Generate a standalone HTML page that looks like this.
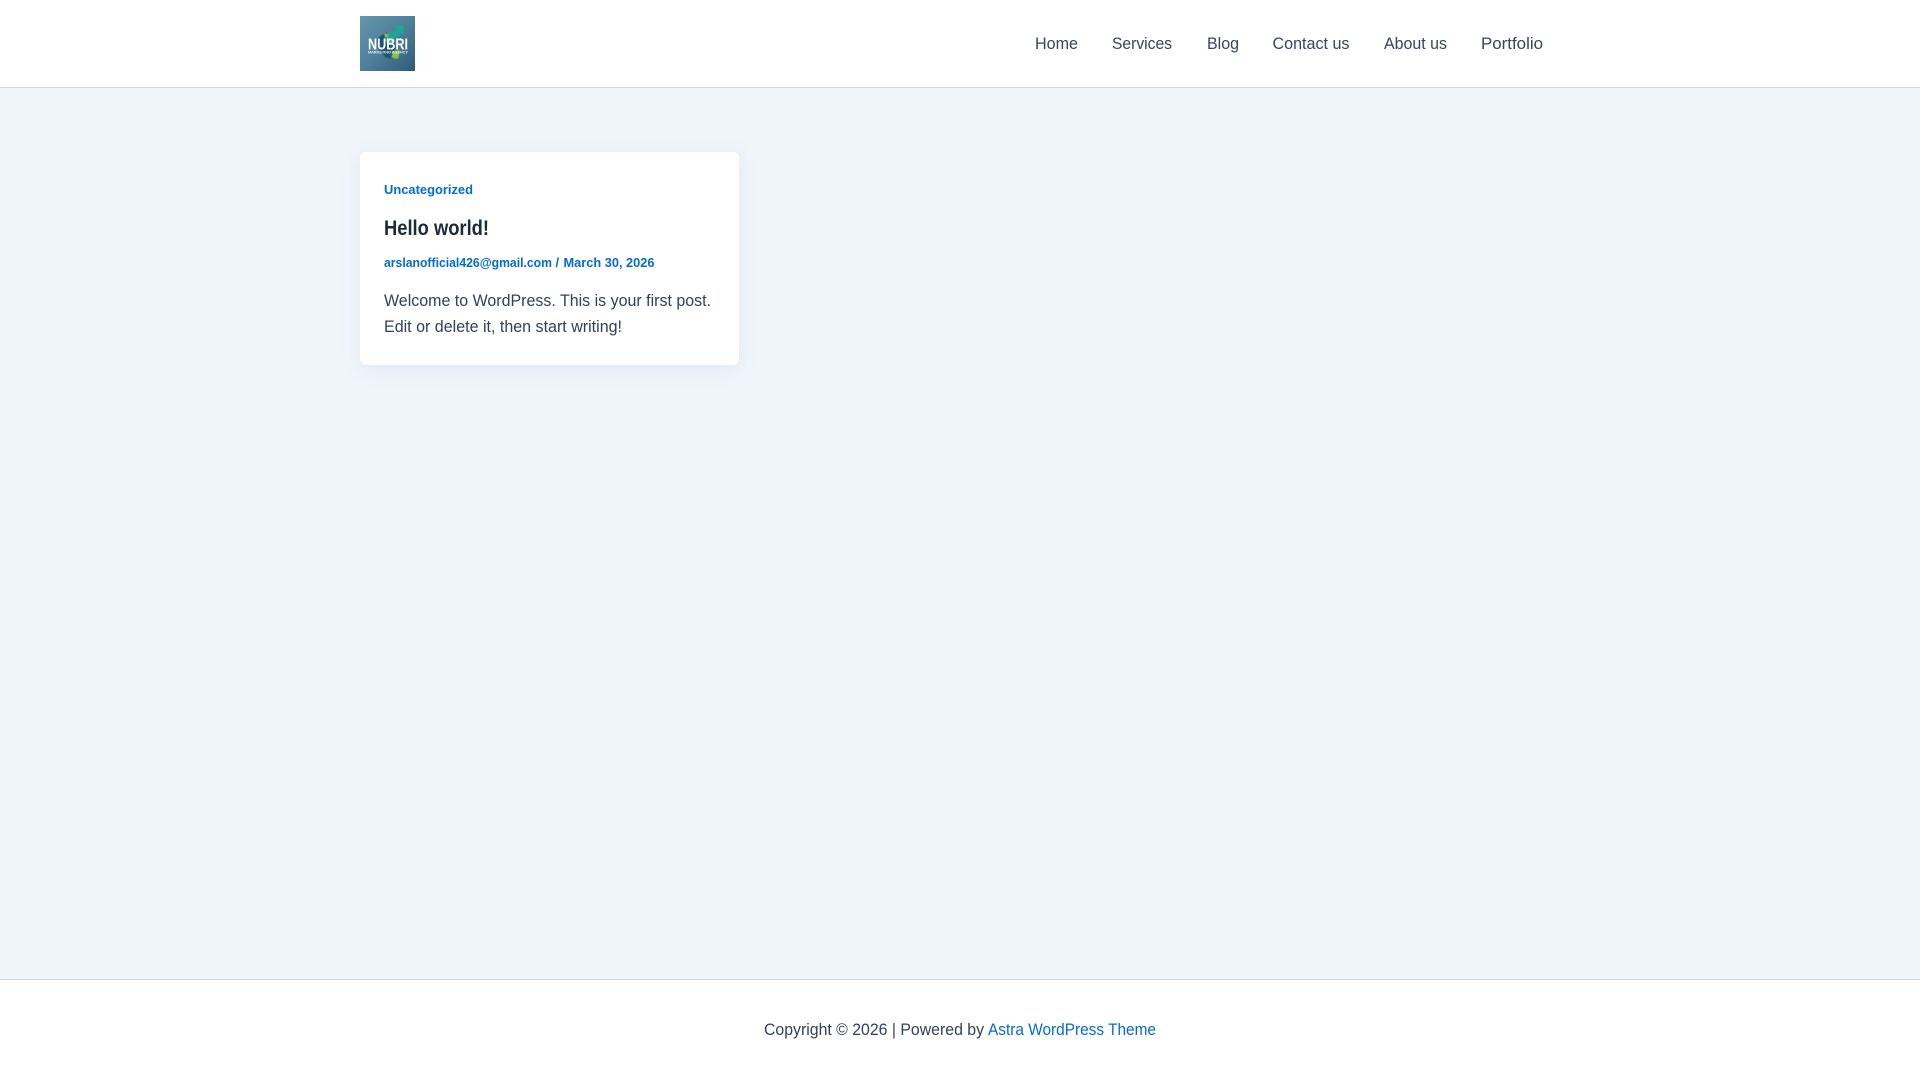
<!DOCTYPE html>
<html lang="en"><head><meta charset="utf-8"><title>Hello world</title>
<style>
html,body{margin:0;padding:0;width:1920px;height:1080px;overflow:hidden;background:#fff}
body{position:relative;font-family:"Liberation Sans",sans-serif}
.hdr{position:absolute;left:0;top:0;width:1920px;height:87px;background:#fff;border-bottom:1px solid #d1d5db}
.main{position:absolute;left:0;top:88px;width:1920px;height:891px;background:#f0f5fa}
.ftr{position:absolute;left:0;top:979px;width:1920px;height:101px;background:#fff;border-top:1px solid #d1d5db;box-sizing:border-box}
.card{position:absolute;left:360px;top:152px;width:379px;height:213px;background:#fff;border-radius:6px;box-shadow:0 4px 20px rgba(100,130,170,.1)}
svg.t{position:absolute;left:0;top:0}
svg.t text{font-family:"Liberation Sans",sans-serif}
.n{font-size:16.3px;fill:#3a4556}
.b{font-size:13px;font-weight:700;fill:#046bd2}
.p{font-size:16.3px;fill:#334155}
</style></head><body>
<div class="hdr"></div>
<div class="main"></div>
<div class="ftr"></div>
<div class="card"></div>
<svg style="position:absolute;left:360px;top:16px" width="55" height="55" viewBox="0 0 55 55">
<defs><linearGradient id="g" x1="0" y1="0" x2="1" y2="1"><stop offset="0" stop-color="#6496ad"/><stop offset=".5" stop-color="#4f7f9a"/><stop offset="1" stop-color="#2f5b78"/></linearGradient>
<filter id="f" x="-10%" y="-10%" width="120%" height="120%"><feGaussianBlur stdDeviation=".55"/></filter>
<filter id="s" x="-10%" y="-10%" width="120%" height="120%"><feGaussianBlur stdDeviation=".3"/></filter></defs>
<rect width="55" height="55" fill="url(#g)"/>
<g filter="url(#f)">
<path d="M17 23 L26 16 L34 24 L36 38 L26 42 L18 32Z" fill="#1b5573"/>
<path d="M24 17 L30 19 L33 28 L27 27Z" fill="#8cc63f"/>
<path d="M25 22 L37 13 L33 10 L43 9 L44 20 L41 17 L31 26Z" fill="#1fa797"/>
<path d="M29 36 L40 34 L38 43 L31 41Z" fill="#8cc63f"/>
<path d="M25 36 L33 36 L31 43 L26 41Z" fill="#1b5573"/>
</g>
<g filter="url(#s)">
<text x="8" y="33.5" font-size="15.5" font-weight="700" fill="#fff" textLength="40" lengthAdjust="spacingAndGlyphs" style="font-family:'Liberation Sans',sans-serif">NUBRI</text>
<text x="8" y="37.5" font-size="4" font-weight="700" fill="#e4eaee" textLength="40" lengthAdjust="spacingAndGlyphs" style="font-family:'Liberation Sans',sans-serif">MARKETING AGENCY</text>
</g>
</svg>
<svg class="t" width="1920" height="1080" viewBox="0 0 1920 1080">
<text class="n" x="1035" y="49" textLength="43" lengthAdjust="spacingAndGlyphs">Home</text>
<text class="n" x="1112" y="49" textLength="60" lengthAdjust="spacingAndGlyphs">Services</text>
<text class="n" x="1207" y="49" textLength="32" lengthAdjust="spacingAndGlyphs">Blog</text>
<text class="n" x="1272.5" y="49" textLength="77" lengthAdjust="spacingAndGlyphs">Contact us</text>
<text class="n" x="1384" y="49" textLength="63" lengthAdjust="spacingAndGlyphs">About us</text>
<text class="n" x="1481" y="49" textLength="62" lengthAdjust="spacingAndGlyphs">Portfolio</text>
<text class="b" x="384" y="194" textLength="89" lengthAdjust="spacingAndGlyphs">Uncategorized</text>
<text x="384" y="235" font-size="20.8" font-weight="700" fill="#1e293b" textLength="105" lengthAdjust="spacingAndGlyphs">Hello world!</text>
<text class="b" x="384" y="267" textLength="168" lengthAdjust="spacingAndGlyphs">arslanofficial426@gmail.com</text>
<text class="b" x="555.5" y="267">/</text>
<text class="b" x="563.5" y="267" textLength="91" lengthAdjust="spacingAndGlyphs">March 30, 2026</text>
<text class="p" x="384" y="306" textLength="327" lengthAdjust="spacingAndGlyphs">Welcome to WordPress. This is your first post.</text>
<text class="p" x="384" y="332" textLength="238" lengthAdjust="spacingAndGlyphs">Edit or delete it, then start writing!</text>
<text class="p" x="764" y="1035" textLength="220" lengthAdjust="spacingAndGlyphs">Copyright © 2026 | Powered by</text>
<text x="988" y="1035" font-size="16.3" fill="#046bd2" textLength="168" lengthAdjust="spacingAndGlyphs">Astra WordPress Theme</text>
</svg>
</body></html>
